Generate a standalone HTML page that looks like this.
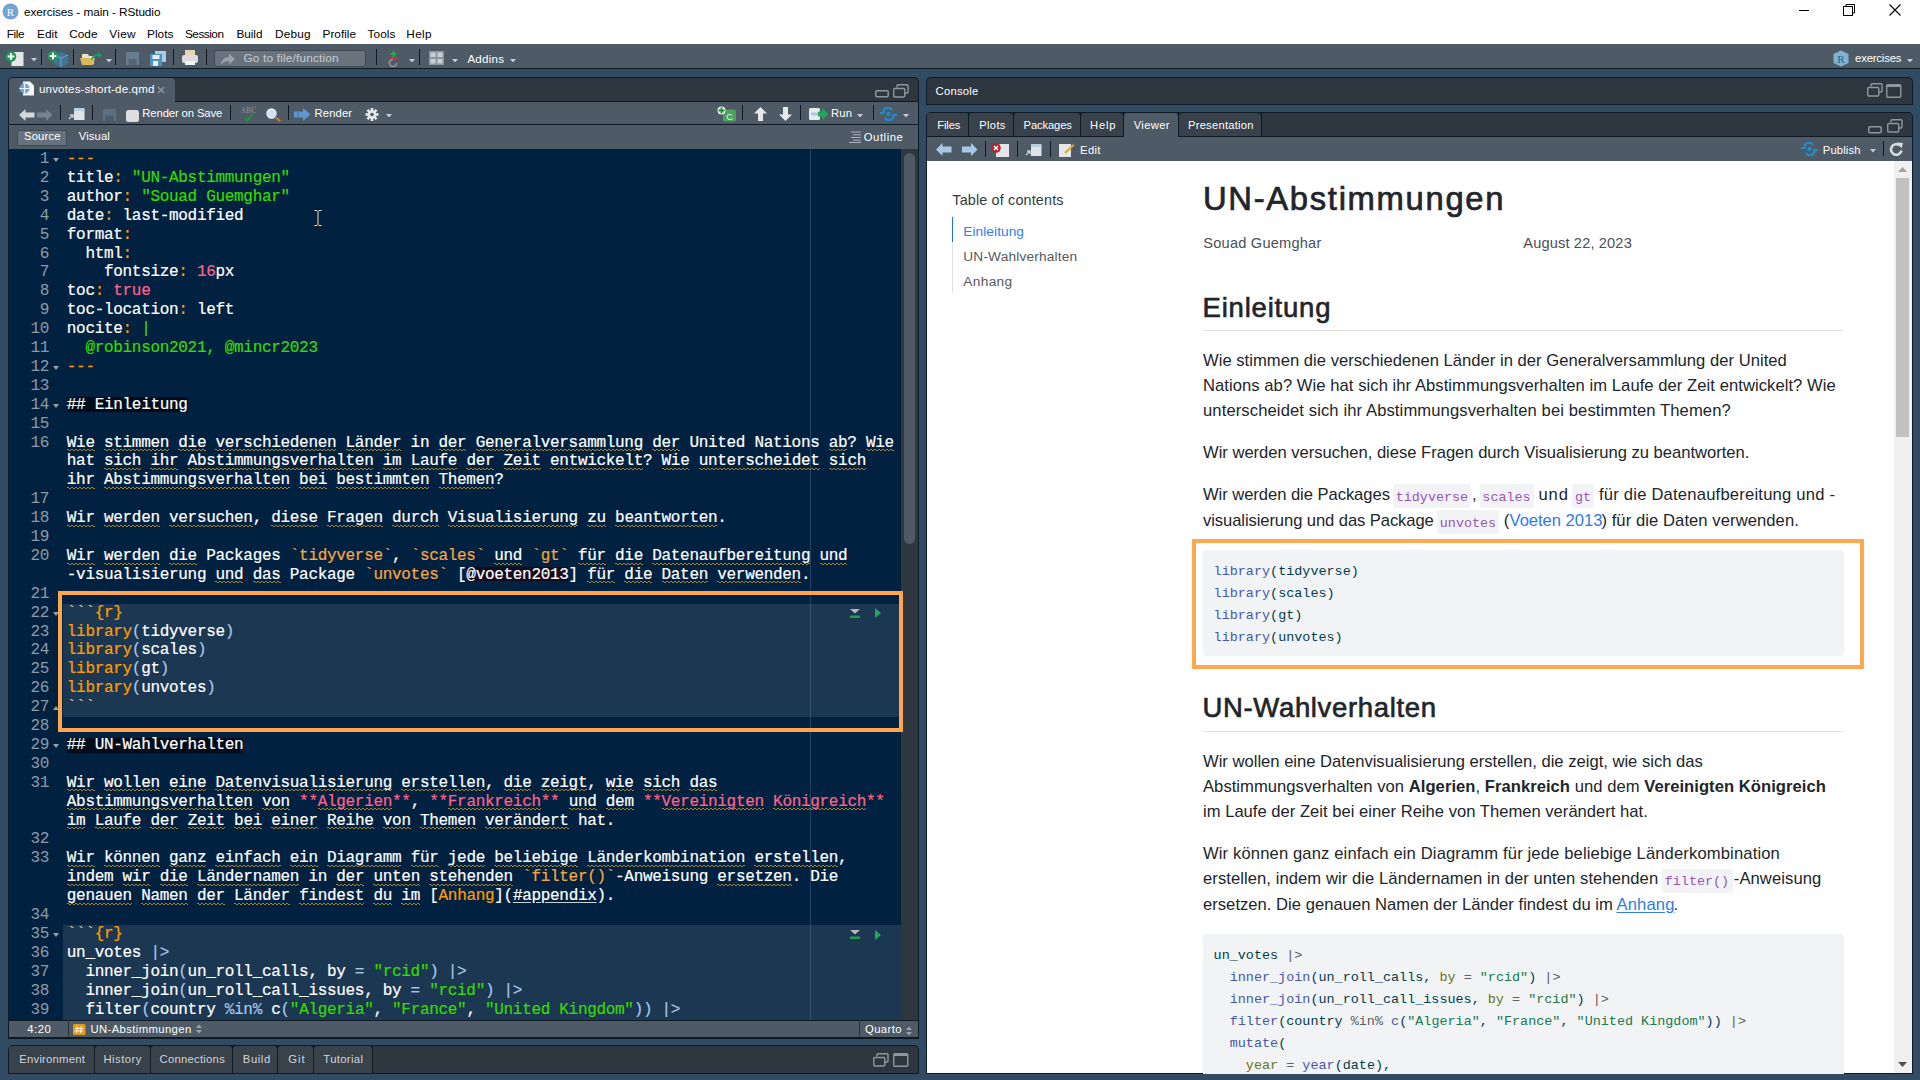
<!DOCTYPE html><html><head><meta charset="utf-8"><style>
*{margin:0;padding:0;box-sizing:border-box}
html,body{width:1920px;height:1080px;overflow:hidden;background:#314b63}
body>div{position:absolute}
.t{white-space:pre}
.cl{position:absolute;left:66.8px;height:18.9px;line-height:18.9px;font-family:'Liberation Mono',monospace;font-size:16px;letter-spacing:-0.31px;white-space:pre;margin-top:-0.1px;-webkit-text-stroke-width:0.2px}
.ln{position:absolute;left:8px;width:41px;text-align:right;height:18.9px;line-height:18.9px;font-family:'Liberation Mono',monospace;font-size:16px;letter-spacing:-0.31px;color:#8e9aa6;white-space:pre;margin-top:-0.1px}
.vc{position:absolute;white-space:pre;font-family:'Liberation Mono',monospace;font-size:13.45px;line-height:15.23px}
.cl u{text-decoration:none;background-image:repeating-linear-gradient(90deg,#a88224 0 2px,transparent 2px 4px),repeating-linear-gradient(90deg,transparent 0 2px,#a88224 2px 4px);background-size:100% 1px,100% 1px;background-position:0 15.6px,0 16.6px;background-repeat:no-repeat}
.cl .ul{text-decoration:underline;text-decoration-color:#c9d0d8;text-underline-offset:2px}
</style></head><body><div style="left:0px;top:0px;width:1920px;height:44px;background:#ffffff;"></div>
<div style="left:0px;top:44px;width:1920px;height:1036px;background:#314b63;"></div>
<div style="left:0px;top:44px;width:1920px;height:24px;background:#4e5a66;"></div>
<div style="left:0px;top:68px;width:1920px;height:1px;background:#0e1b26;"></div>
<div style="left:8px;top:77px;width:911px;height:962px;background:#0e1b26;border-radius:5px 5px 0 0;"></div>
<div style="left:9px;top:78px;width:909px;height:23px;background:#2e363f;border-radius:4px 4px 0 0;"></div>
<div style="left:9px;top:101px;width:909px;height:1px;background:#0e1b26;"></div>
<div style="left:9px;top:102px;width:909px;height:22px;background:#4e5a66;"></div>
<div style="left:9px;top:124px;width:909px;height:1px;background:#0e1b26;"></div>
<div style="left:9px;top:125px;width:909px;height:24px;background:#4e5a66;"></div>
<div style="left:9px;top:149px;width:892px;height:871px;background:#002240;"></div>
<div style="left:901px;top:149px;width:17px;height:871px;background:#2e363f;"></div>
<div style="left:904px;top:153px;width:11px;height:391px;background:#4e5a66;border-radius:6px;"></div>
<div style="left:9px;top:1020px;width:909px;height:1px;background:#0e1b26;"></div>
<div style="left:9px;top:1021px;width:909px;height:16px;background:#4e5a66;"></div>
<div style="left:8px;top:1045px;width:911px;height:29px;background:#0e1b26;border-radius:5px 5px 0 0;"></div>
<div style="left:9px;top:1046px;width:909px;height:27px;background:#2e363f;border-radius:4px 4px 0 0;"></div>
<div style="left:926px;top:77px;width:987px;height:28px;background:#0e1b26;border-radius:5px 5px 0 0;"></div>
<div style="left:927px;top:78px;width:985px;height:26px;background:#2e363f;border-radius:4px 4px 0 0;"></div>
<div style="left:926px;top:112px;width:987px;height:962px;background:#0e1b26;border-radius:5px 5px 0 0;"></div>
<div style="left:927px;top:113px;width:985px;height:23px;background:#2e363f;border-radius:4px 4px 0 0;"></div>
<div style="left:927px;top:137px;width:985px;height:24px;background:#4e5a66;"></div>
<div style="left:927px;top:161px;width:985px;height:912px;background:#ffffff;"></div>
<svg style="position:absolute;left:2px;top:3px;" width="17" height="17" viewBox="0 0 17 17"><circle cx="8.5" cy="8.5" r="8" fill="#72a2d6"/><text x="8.5" y="12.6" font-family="Liberation Serif" font-size="11" fill="#fff" text-anchor="middle">R</text></svg>
<div class="t" style="left:24px;top:5.62px;font-size:11.8px;line-height:13.18px;font-family:'Liberation Sans', sans-serif;color:#000;letter-spacing:-0.075px;">exercises - main - RStudio</div>
<div style="left:1799px;top:10px;width:10px;height:1px;background:#000;"></div>
<svg style="position:absolute;left:1843px;top:4px;" width="12" height="12" viewBox="0 0 12 12"><path d="M3 2.5 V0.5 H11.5 V9 H9.5" fill="none" stroke="#000" stroke-width="1"/><rect x="0.5" y="2.5" width="9" height="9" fill="none" stroke="#000" stroke-width="1"/></svg>
<svg style="position:absolute;left:1889px;top:4px;" width="12" height="12" viewBox="0 0 12 12"><path d="M0.5 0.5 L11.5 11.5 M11.5 0.5 L0.5 11.5" stroke="#000" stroke-width="1.1"/></svg>
<div class="t" style="left:6.8px;top:27.52px;font-size:11.8px;line-height:13.18px;font-family:'Liberation Sans', sans-serif;color:#000;letter-spacing:-0.438px;">File</div>
<div class="t" style="left:37px;top:27.52px;font-size:11.8px;line-height:13.18px;font-family:'Liberation Sans', sans-serif;color:#000;letter-spacing:0.056px;">Edit</div>
<div class="t" style="left:69.3px;top:27.52px;font-size:11.8px;line-height:13.18px;font-family:'Liberation Sans', sans-serif;color:#000;letter-spacing:-0.003px;">Code</div>
<div class="t" style="left:109.3px;top:27.52px;font-size:11.8px;line-height:13.18px;font-family:'Liberation Sans', sans-serif;color:#000;letter-spacing:0.279px;">View</div>
<div class="t" style="left:147px;top:27.52px;font-size:11.8px;line-height:13.18px;font-family:'Liberation Sans', sans-serif;color:#000;letter-spacing:0.067px;">Plots</div>
<div class="t" style="left:185px;top:27.52px;font-size:11.8px;line-height:13.18px;font-family:'Liberation Sans', sans-serif;color:#000;letter-spacing:-0.497px;">Session</div>
<div class="t" style="left:236.5px;top:27.52px;font-size:11.8px;line-height:13.18px;font-family:'Liberation Sans', sans-serif;color:#000;letter-spacing:-0.060px;">Build</div>
<div class="t" style="left:275px;top:27.52px;font-size:11.8px;line-height:13.18px;font-family:'Liberation Sans', sans-serif;color:#000;letter-spacing:0.182px;">Debug</div>
<div class="t" style="left:322.5px;top:27.52px;font-size:11.8px;line-height:13.18px;font-family:'Liberation Sans', sans-serif;color:#000;letter-spacing:0.009px;">Profile</div>
<div class="t" style="left:367.5px;top:27.52px;font-size:11.8px;line-height:13.18px;font-family:'Liberation Sans', sans-serif;color:#000;letter-spacing:0.113px;">Tools</div>
<div class="t" style="left:406.3px;top:27.52px;font-size:11.8px;line-height:13.18px;font-family:'Liberation Sans', sans-serif;color:#000;letter-spacing:0.310px;">Help</div>
<svg style="position:absolute;left:5px;top:50px;" width="22" height="17" viewBox="0 0 22 17"><rect x="6.5" y="2" width="12" height="14" fill="#e6e6e6"/><circle cx="6" cy="6.5" r="5.3" fill="#1d9a58"/><path d="M6 3.2 V9.8 M2.7 6.5 H9.3" stroke="#fff" stroke-width="2"/></svg>
<svg style="position:absolute;left:31px;top:57.5px;" width="6" height="3.5" viewBox="0 0 6 3.5"><path d="M0 0 L6 0 L3 3.5 Z" fill="#c9cdd1"/></svg>
<div style="left:41px;top:49px;width:1px;height:16px;background:#111820;"></div>
<svg style="position:absolute;left:47px;top:50px;" width="23" height="18" viewBox="0 0 23 18"><path d="M7 5 L14 2 L21 5 L21 14 L14 17 L7 14 Z" fill="#3d7fa6" opacity="0.75"/><path d="M7 5 L14 8 L21 5 M14 8 V17" stroke="#62a8cc" stroke-width="1" fill="none"/><circle cx="6" cy="6" r="5.3" fill="#1d9a58"/><path d="M6 2.7 V9.3 M2.7 6 H9.3" stroke="#fff" stroke-width="2"/></svg>
<div style="left:73px;top:49px;width:1px;height:16px;background:#111820;"></div>
<svg style="position:absolute;left:80px;top:51px;" width="23" height="15" viewBox="0 0 23 15"><path d="M2 3 H8 L9 5 H14 V13 H2 Z" fill="#e8e2c8"/><path d="M0 7 H15 L13 14 H2 Z" fill="#d9b861"/><path d="M11 8 Q13 3 18 3 L18 1 L22 4 L18 7 L18 5 Q14 5 12 9Z" fill="#1f9a6a"/></svg>
<svg style="position:absolute;left:106px;top:58.5px;" width="6" height="3.5" viewBox="0 0 6 3.5"><path d="M0 0 L6 0 L3 3.5 Z" fill="#c9cdd1"/></svg>
<div style="left:115px;top:49px;width:1px;height:16px;background:#111820;"></div>
<svg style="position:absolute;left:126px;top:52px;opacity:0.85" width="14" height="14" viewBox="0 0 14 14"><rect x="0" y="0" width="13" height="13" fill="#6e8396"/><rect x="2.5" y="7" width="8" height="6" fill="#55697c"/></svg>
<svg style="position:absolute;left:150px;top:51px;" width="17" height="15" viewBox="0 0 17 15"><rect x="5" y="0" width="11" height="11" fill="#a9cde6"/><rect x="0" y="3" width="12" height="12" fill="#4f8fc2"/><rect x="2.5" y="4" width="7" height="4" fill="#e8eef3"/><rect x="3" y="10" width="5" height="5" fill="#e8eef3"/></svg>
<div style="left:173px;top:49px;width:1px;height:16px;background:#111820;"></div>
<svg style="position:absolute;left:182px;top:50px;" width="17" height="16" viewBox="0 0 17 16"><rect x="3" y="0" width="10" height="6" fill="#e2d6b0"/><rect x="0" y="5" width="16" height="8" rx="2" fill="#dcdcdc"/><rect x="3" y="11" width="10" height="4" fill="#f2f2f2"/></svg>
<div style="left:206px;top:49px;width:1px;height:16px;background:#111820;"></div>
<div style="left:214px;top:50px;width:152px;height:17px;background:#68737e;border:1px solid #3d4853;border-radius:3px;"></div>
<svg style="position:absolute;left:220px;top:52px;" width="16" height="14" viewBox="0 0 16 14"><path d="M1 13 Q2 5 9 5 V1.5 L15 7 L9 12.5 V9 Q4 9 1 13Z" fill="#98a2ab"/></svg>
<div class="t" style="left:243.4px;top:52.32px;font-size:11.8px;line-height:13.18px;font-family:'Liberation Sans', sans-serif;color:#c6ccd1;letter-spacing:0.193px;">Go to file/function</div>
<div style="left:376px;top:49px;width:1px;height:16px;background:#111820;"></div>
<svg style="position:absolute;left:388px;top:50px;" width="11" height="17" viewBox="0 0 11 17"><path d="M5.5 1 V7 M2.5 4 H8.5" stroke="#22aa44" stroke-width="2"/><path d="M1.5 8.5 H9.5" stroke="#cc3333" stroke-width="2"/><path d="M8.5 13 A3.5 3.5 0 1 1 5 9.5" fill="none" stroke="#8c98a3" stroke-width="1.6"/></svg>
<svg style="position:absolute;left:409px;top:58.5px;" width="6" height="3.5" viewBox="0 0 6 3.5"><path d="M0 0 L6 0 L3 3.5 Z" fill="#c9cdd1"/></svg>
<div style="left:419px;top:49px;width:1px;height:16px;background:#111820;"></div>
<svg style="position:absolute;left:429px;top:51px;" width="16" height="14" viewBox="0 0 16 14"><rect x="0" y="0" width="15" height="14" fill="#8b96a0"/><rect x="1.5" y="1.5" width="5" height="4.5" fill="#c8cdd2"/><rect x="8.5" y="1.5" width="5" height="4.5" fill="#c8cdd2"/><rect x="1.5" y="8" width="5" height="4.5" fill="#c8cdd2"/><rect x="8.5" y="8" width="5" height="4.5" fill="#c8cdd2"/></svg>
<svg style="position:absolute;left:452px;top:58.5px;" width="6" height="3.5" viewBox="0 0 6 3.5"><path d="M0 0 L6 0 L3 3.5 Z" fill="#c9cdd1"/></svg>
<div class="t" style="left:467.4px;top:52.50px;font-size:11.6px;line-height:12.96px;font-family:'Liberation Sans', sans-serif;color:#fff;letter-spacing:0.226px;">Addins</div>
<svg style="position:absolute;left:510px;top:58.5px;" width="6" height="3.5" viewBox="0 0 6 3.5"><path d="M0 0 L6 0 L3 3.5 Z" fill="#c9cdd1"/></svg>
<svg style="position:absolute;left:1833px;top:50px;" width="16" height="17" viewBox="0 0 16 17"><path d="M8 0.5 L15.5 4 V13 L8 16.5 L0.5 13 V4 Z" fill="#7fb3cf"/><text x="8" y="12.5" font-family="Liberation Serif" font-size="11" fill="#2a5f8a" text-anchor="middle">R</text></svg>
<div class="t" style="left:1855px;top:52.27px;font-size:11.3px;line-height:12.62px;font-family:'Liberation Sans', sans-serif;color:#fff;letter-spacing:-0.153px;">exercises</div>
<svg style="position:absolute;left:1907px;top:58.5px;" width="6" height="3.5" viewBox="0 0 6 3.5"><path d="M0 0 L6 0 L3 3.5 Z" fill="#c9cdd1"/></svg>
<div style="left:9px;top:78px;width:166px;height:24px;background:#4e5a66;border-radius:4px 4px 0 0;"></div>
<svg style="position:absolute;left:19px;top:81px;" width="16" height="15" viewBox="0 0 16 15"><path d="M4 0.5 H11 L15 4.5 V14.5 H4 Z" fill="#f4f6f8"/><circle cx="5.5" cy="7.5" r="5" fill="#6fa3dc"/><path d="M5.5 2.5 V12.5 M0.5 7.5 H10.5" stroke="#f4f6f8" stroke-width="1.2"/></svg>
<div class="t" style="left:39px;top:83.30px;font-size:11.6px;line-height:12.96px;font-family:'Liberation Sans', sans-serif;color:#fff;letter-spacing:0.140px;">unvotes-short-de.qmd</div>
<svg style="position:absolute;left:157px;top:86px;" width="8" height="8" viewBox="0 0 8 8"><path d="M1 1 L7 7 M7 1 L1 7" stroke="#8a949d" stroke-width="1.6"/></svg>
<svg style="position:absolute;left:875px;top:90px;" width="14" height="8" viewBox="0 0 14 8"><rect x="0.75" y="0.75" width="12.5" height="6" rx="1.2" fill="none" stroke="#8e979f" stroke-width="1.5"/></svg>
<svg style="position:absolute;left:893px;top:84px;" width="16" height="14" viewBox="0 0 16 14"><path d="M4 3.5 V1.8 Q4 0.75 5 0.75 H14 Q15 0.75 15 1.8 V8 Q15 9 14 9 H12" fill="none" stroke="#8e979f" stroke-width="1.4"/><rect x="0.75" y="4.5" width="11" height="8.5" rx="1" fill="none" stroke="#8e979f" stroke-width="1.4"/></svg>
<svg style="position:absolute;left:19px;top:109px;" width="16" height="12" viewBox="0 0 16 12"><path d="M0 6 L6.5 0 V3.5 H15.5 V8.5 H6.5 V12 Z" fill="#d3d7db"/></svg>
<svg style="position:absolute;left:37px;top:109px;" width="16" height="12" viewBox="0 0 16 12"><path d="M15.5 6 L9 0 V3.5 H0 V8.5 H9 V12 Z" fill="#76828d"/></svg>
<div style="left:60px;top:105px;width:1px;height:15px;background:#111820;"></div>
<svg style="position:absolute;left:68px;top:108px;" width="17" height="12" viewBox="0 0 17 12"><path d="M6 1.5 Q6 0 8 0 H15 Q16.5 0 16.5 2 V12 H6 Z" fill="#dfe4e8"/><path d="M6 0 H16.5 V3 H6Z" fill="#b7cde0"/><path d="M1 11 L5 7 M2 7 H5 V10" stroke="#c8cdd2" stroke-width="1.4" fill="none"/></svg>
<div style="left:92px;top:105px;width:1px;height:15px;background:#111820;"></div>
<svg style="position:absolute;left:103px;top:109px;" width="13" height="12" viewBox="0 0 13 12"><rect x="0" y="0" width="13" height="12" fill="#5a6f82"/><rect x="2.5" y="6.5" width="8" height="5.5" fill="#485b6d"/></svg>
<div style="left:125.5px;top:110px;width:13px;height:12px;background:#dcdee0;border-radius:2.5px;"></div>
<div class="t" style="left:142.3px;top:107.47px;font-size:11.3px;line-height:12.62px;font-family:'Liberation Sans', sans-serif;color:#fff;letter-spacing:-0.128px;">Render on Save</div>
<div style="left:230px;top:105px;width:1px;height:15px;background:#111820;"></div>
<svg style="position:absolute;left:239px;top:106px;" width="19" height="16" viewBox="0 0 19 16"><text x="9.5" y="6.5" font-family="Liberation Serif" font-size="7.5" fill="#8d969e" text-anchor="middle">ABC</text><path d="M6 11.5 L8.5 14.5 L13 8.5" stroke="#1a9a3a" stroke-width="1.8" fill="none"/></svg>
<svg style="position:absolute;left:266px;top:108px;" width="16" height="14" viewBox="0 0 16 14"><circle cx="5.5" cy="5.5" r="4.5" fill="#cfe2f0" stroke="#e8eef2" stroke-width="1.4"/><path d="M9 9 L14.5 13.5" stroke="#b07a3a" stroke-width="2.4"/></svg>
<div style="left:288px;top:105px;width:1px;height:15px;background:#111820;"></div>
<svg style="position:absolute;left:294px;top:108px;" width="17" height="13" viewBox="0 0 17 13"><path d="M0 3.5 H9 V0 L16.5 6.5 L9 13 V9.5 H0 Z" fill="#5d97d1"/><path d="M4 3.5 V9.5" stroke="#3b6fa5" stroke-width="1"/></svg>
<div class="t" style="left:314.6px;top:107.47px;font-size:11.3px;line-height:12.62px;font-family:'Liberation Sans', sans-serif;color:#fff;letter-spacing:0.088px;">Render</div>
<svg style="position:absolute;left:365px;top:108px;" width="14" height="13" viewBox="0 0 14 13"><g transform="translate(7 6.5)"><circle r="4.2" fill="#e8eaec"/><g fill="#e8eaec"><rect x="-1.3" y="-6.5" width="2.6" height="13"/><rect x="-1.3" y="-6.5" width="2.6" height="13" transform="rotate(45)"/><rect x="-1.3" y="-6.5" width="2.6" height="13" transform="rotate(90)"/><rect x="-1.3" y="-6.5" width="2.6" height="13" transform="rotate(135)"/></g><circle r="1.8" fill="#4e5a65"/></g></svg>
<svg style="position:absolute;left:386px;top:113.5px;" width="6" height="3.5" viewBox="0 0 6 3.5"><path d="M0 0 L6 0 L3 3.5 Z" fill="#c9cdd1"/></svg>
<svg style="position:absolute;left:717px;top:106px;" width="20" height="16" viewBox="0 0 20 16"><rect x="6" y="3.5" width="13" height="12" rx="2" fill="#49a35a"/><text x="12.5" y="13.5" font-family="Liberation Sans" font-size="9" fill="#e8f4ea" text-anchor="middle">C</text><circle cx="4.5" cy="4.5" r="4" fill="#e8f4ea"/><path d="M4.5 1.5 V7.5 M1.5 4.5 H7.5" stroke="#1d8a3d" stroke-width="1.8"/></svg>
<div style="left:742px;top:105px;width:1px;height:15px;background:#111820;"></div>
<svg style="position:absolute;left:754px;top:107px;" width="13" height="14" viewBox="0 0 13 14"><path d="M6.5 0 L13 6.5 H9 V14 H4 V6.5 H0 Z" fill="#e6e9ec"/></svg>
<svg style="position:absolute;left:779px;top:107px;" width="13" height="14" viewBox="0 0 13 14"><path d="M6.5 14 L13 7.5 H9 V0 H4 V7.5 H0 Z" fill="#e6e9ec"/></svg>
<div style="left:800px;top:105px;width:1px;height:15px;background:#111820;"></div>
<svg style="position:absolute;left:809px;top:107px;" width="20" height="14" viewBox="0 0 20 14"><rect x="0" y="1" width="11" height="12" rx="1.5" fill="#e8ecef"/><rect x="2" y="5.5" width="7" height="3" fill="#a9c6e4"/><path d="M9 4.5 H13 V1 L19.5 7 L13 13 V9.5 H9 Z" fill="#22a55a"/></svg>
<div class="t" style="left:831px;top:107.27px;font-size:11.3px;line-height:12.62px;font-family:'Liberation Sans', sans-serif;color:#fff;letter-spacing:0.135px;">Run</div>
<svg style="position:absolute;left:857px;top:113.5px;" width="6" height="3.5" viewBox="0 0 6 3.5"><path d="M0 0 L6 0 L3 3.5 Z" fill="#c9cdd1"/></svg>
<div style="left:873px;top:105px;width:1px;height:15px;background:#111820;"></div>
<svg style="position:absolute;left:880px;top:107px;" width="18" height="14" viewBox="0 0 18 14"><path d="M0 6 H3.6 A4.6 4.6 0 0 1 12.2 3.2" stroke="#1a8fd6" stroke-width="2" fill="none"/><path d="M17 8 H13.4 A4.6 4.6 0 0 1 4.8 10.8" stroke="#1a8fd6" stroke-width="2" fill="none"/><circle cx="8.5" cy="7" r="2.1" fill="#1a8fd6"/></svg>
<svg style="position:absolute;left:903px;top:113.5px;" width="6" height="3.5" viewBox="0 0 6 3.5"><path d="M0 0 L6 0 L3 3.5 Z" fill="#c9cdd1"/></svg>
<div style="left:16.7px;top:129.6px;width:50.6px;height:16.7px;background:#66727d;border:1px solid #3f4a55;border-radius:2px;"></div>
<div class="t" style="left:24px;top:130.37px;font-size:11.3px;line-height:12.62px;font-family:'Liberation Sans', sans-serif;color:#fff;letter-spacing:0.139px;">Source</div>
<div class="t" style="left:78.8px;top:130.37px;font-size:11.3px;line-height:12.62px;font-family:'Liberation Sans', sans-serif;color:#fff;letter-spacing:0.085px;">Visual</div>
<svg style="position:absolute;left:849px;top:131px;" width="13" height="12" viewBox="0 0 13 12"><path d="M2 1 H12 M4 3.8 H12 M2 6.5 H12 M4 9.2 H12 M0 11.5 H12" stroke="#aab3bb" stroke-width="1.1"/></svg>
<div class="t" style="left:863.8px;top:131.02px;font-size:11.3px;line-height:12.62px;font-family:'Liberation Sans', sans-serif;color:#fff;letter-spacing:0.533px;">Outline</div>
<div style="left:68px;top:1020px;width:1px;height:17px;background:#27313a;"></div>
<div class="t" style="left:27.3px;top:1022.57px;font-size:11.3px;line-height:12.62px;font-family:'Liberation Sans', sans-serif;color:#fff;letter-spacing:0.502px;">4:20</div>
<svg style="position:absolute;left:72.5px;top:1024px;" width="13" height="11" viewBox="0 0 13 11"><rect x="0" y="0" width="12.5" height="11" rx="1.5" fill="#e39a22"/><path d="M4.5 2 L3.5 9 M8.5 2 L7.5 9 M2 4.5 H10.5 M1.5 7 H10" stroke="#fff4de" stroke-width="1"/></svg>
<div class="t" style="left:90.5px;top:1022.77px;font-size:11.3px;line-height:12.62px;font-family:'Liberation Sans', sans-serif;color:#fff;letter-spacing:0.375px;">UN-Abstimmungen</div>
<svg style="position:absolute;left:196px;top:1024px;" width="6" height="10" viewBox="0 0 6 10"><path d="M0 4 L3 0.5 L6 4Z M0 6 L3 9.5 L6 6Z" fill="#9aa3ab"/></svg>
<div style="left:859px;top:1020px;width:1px;height:17px;background:#27313a;"></div>
<div class="t" style="left:865px;top:1022.77px;font-size:11.3px;line-height:12.62px;font-family:'Liberation Sans', sans-serif;color:#fff;letter-spacing:0.391px;">Quarto</div>
<svg style="position:absolute;left:906px;top:1026px;" width="6" height="10" viewBox="0 0 6 10"><path d="M0 4 L3 0.5 L6 4Z M0 6 L3 9.5 L6 6Z" fill="#9aa3ab"/></svg>
<div style="left:93.5px;top:1046px;width:279px;height:27px;background:#0e1b26;"></div>
<div style="left:9px;top:1046px;width:84.5px;height:27px;background:#39414a;border-radius:3px 3px 0 0;"></div>
<div class="t" style="left:19.3px;top:1053.07px;font-size:11.3px;line-height:12.62px;font-family:'Liberation Sans', sans-serif;color:#d0d5da;letter-spacing:0.206px;">Environment</div>
<div style="left:94.5px;top:1046px;width:55.0px;height:27px;background:#39414a;border-radius:3px 3px 0 0;"></div>
<div class="t" style="left:103.4px;top:1053.07px;font-size:11.3px;line-height:12.62px;font-family:'Liberation Sans', sans-serif;color:#d0d5da;letter-spacing:0.490px;">History</div>
<div style="left:150.5px;top:1046px;width:81.80000000000001px;height:27px;background:#39414a;border-radius:3px 3px 0 0;"></div>
<div class="t" style="left:159.5px;top:1053.07px;font-size:11.3px;line-height:12.62px;font-family:'Liberation Sans', sans-serif;color:#d0d5da;letter-spacing:0.248px;">Connections</div>
<div style="left:233.3px;top:1046px;width:44.0px;height:27px;background:#39414a;border-radius:3px 3px 0 0;"></div>
<div class="t" style="left:242.8px;top:1053.07px;font-size:11.3px;line-height:12.62px;font-family:'Liberation Sans', sans-serif;color:#d0d5da;letter-spacing:0.568px;">Build</div>
<div style="left:278.3px;top:1046px;width:34.30000000000001px;height:27px;background:#39414a;border-radius:3px 3px 0 0;"></div>
<div class="t" style="left:288.2px;top:1053.07px;font-size:11.3px;line-height:12.62px;font-family:'Liberation Sans', sans-serif;color:#d0d5da;letter-spacing:1.030px;">Git</div>
<div style="left:313.6px;top:1046px;width:58.0px;height:27px;background:#39414a;border-radius:3px 3px 0 0;"></div>
<div class="t" style="left:323.3px;top:1053.07px;font-size:11.3px;line-height:12.62px;font-family:'Liberation Sans', sans-serif;color:#d0d5da;letter-spacing:0.348px;">Tutorial</div>
<svg style="position:absolute;left:873px;top:1053px;" width="16" height="14" viewBox="0 0 16 14"><path d="M4 3.5 V1.8 Q4 0.75 5 0.75 H14 Q15 0.75 15 1.8 V8 Q15 9 14 9 H12" fill="none" stroke="#8e979f" stroke-width="1.4"/><rect x="0.75" y="4.5" width="11" height="8.5" rx="1" fill="none" stroke="#8e979f" stroke-width="1.4"/></svg>
<svg style="position:absolute;left:893px;top:1053px;" width="16" height="14" viewBox="0 0 16 14"><rect x="0.75" y="0.75" width="14" height="12.5" rx="1" fill="none" stroke="#8e979f" stroke-width="1.4"/><path d="M0.75 2 H14.75" stroke="#8e979f" stroke-width="2"/></svg>
<div class="t" style="left:935.6px;top:85.27px;font-size:11.3px;line-height:12.62px;font-family:'Liberation Sans', sans-serif;color:#fff;letter-spacing:0.207px;">Console</div>
<svg style="position:absolute;left:1867px;top:83px;" width="16" height="14" viewBox="0 0 16 14"><path d="M4 3.5 V1.8 Q4 0.75 5 0.75 H14 Q15 0.75 15 1.8 V8 Q15 9 14 9 H12" fill="none" stroke="#8e979f" stroke-width="1.4"/><rect x="0.75" y="4.5" width="11" height="8.5" rx="1" fill="none" stroke="#8e979f" stroke-width="1.4"/></svg>
<svg style="position:absolute;left:1886px;top:84px;" width="16" height="14" viewBox="0 0 16 14"><rect x="0.75" y="0.75" width="14" height="12.5" rx="1" fill="none" stroke="#8e979f" stroke-width="1.4"/><path d="M0.75 2 H14.75" stroke="#8e979f" stroke-width="2"/></svg>
<div style="left:968px;top:113px;width:294px;height:23px;background:#0e1b26;"></div>
<div style="left:927px;top:113px;width:41px;height:23px;background:#39414a;border-radius:3px 3px 0 0;"></div>
<div class="t" style="left:937.2px;top:119.06px;font-size:11.2px;line-height:12.51px;font-family:'Liberation Sans', sans-serif;color:#fff;letter-spacing:-0.087px;">Files</div>
<div style="left:969px;top:113px;width:44px;height:23px;background:#39414a;border-radius:3px 3px 0 0;"></div>
<div class="t" style="left:979.2px;top:119.06px;font-size:11.2px;line-height:12.51px;font-family:'Liberation Sans', sans-serif;color:#fff;letter-spacing:0.350px;">Plots</div>
<div style="left:1014px;top:113px;width:66px;height:23px;background:#39414a;border-radius:3px 3px 0 0;"></div>
<div class="t" style="left:1023.6px;top:119.06px;font-size:11.2px;line-height:12.51px;font-family:'Liberation Sans', sans-serif;color:#fff;letter-spacing:-0.127px;">Packages</div>
<div style="left:1081px;top:113px;width:42px;height:23px;background:#39414a;border-radius:3px 3px 0 0;"></div>
<div class="t" style="left:1090px;top:119.06px;font-size:11.2px;line-height:12.51px;font-family:'Liberation Sans', sans-serif;color:#fff;letter-spacing:0.822px;">Help</div>
<div style="left:1124px;top:113px;width:54px;height:25px;background:#4e5a66;border-radius:3px 3px 0 0;"></div>
<div class="t" style="left:1133.75px;top:119.06px;font-size:11.2px;line-height:12.51px;font-family:'Liberation Sans', sans-serif;color:#fff;letter-spacing:0.344px;">Viewer</div>
<div style="left:1179px;top:113px;width:82px;height:23px;background:#39414a;border-radius:3px 3px 0 0;"></div>
<div class="t" style="left:1188px;top:119.06px;font-size:11.2px;line-height:12.51px;font-family:'Liberation Sans', sans-serif;color:#fff;letter-spacing:0.238px;">Presentation</div>
<svg style="position:absolute;left:1868px;top:126px;" width="14" height="8" viewBox="0 0 14 8"><rect x="0.75" y="0.75" width="12.5" height="6" rx="1.2" fill="none" stroke="#8e979f" stroke-width="1.5"/></svg>
<svg style="position:absolute;left:1887px;top:119px;" width="16" height="14" viewBox="0 0 16 14"><path d="M4 3.5 V1.8 Q4 0.75 5 0.75 H14 Q15 0.75 15 1.8 V8 Q15 9 14 9 H12" fill="none" stroke="#8e979f" stroke-width="1.4"/><rect x="0.75" y="4.5" width="11" height="8.5" rx="1" fill="none" stroke="#8e979f" stroke-width="1.4"/></svg>
<svg style="position:absolute;left:935.5px;top:143px;" width="16" height="13" viewBox="0 0 16 13"><path d="M0 6.5 L6.5 0 V3.5 H15.5 V9.5 H6.5 V13 Z" fill="#a6c8e6"/></svg>
<svg style="position:absolute;left:961.5px;top:143px;" width="16" height="13" viewBox="0 0 16 13"><path d="M15.5 6.5 L9 0 V3.5 H0 V9.5 H9 V13 Z" fill="#a6c8e6"/></svg>
<div style="left:984.5px;top:141px;width:1px;height:16px;background:#111820;"></div>
<svg style="position:absolute;left:991px;top:143px;" width="19" height="14" viewBox="0 0 19 14"><rect x="5" y="1" width="13" height="13" fill="#e6e6e6"/><circle cx="5" cy="5" r="4.8" fill="#b3272d"/><path d="M3 3 L7 7 M7 3 L3 7" stroke="#fff" stroke-width="1.4"/></svg>
<div style="left:1016.5px;top:141px;width:1px;height:16px;background:#111820;"></div>
<svg style="position:absolute;left:1025px;top:144px;" width="17" height="12" viewBox="0 0 17 12"><path d="M6 1.5 Q6 0 8 0 H15 Q16.5 0 16.5 2 V12 H6 Z" fill="#dfe4e8"/><path d="M6 0 H16.5 V3 H6Z" fill="#b7cde0"/><path d="M1 11 L5 7 M2 7 H5 V10" stroke="#c8cdd2" stroke-width="1.4" fill="none"/></svg>
<div style="left:1049.5px;top:141px;width:1px;height:16px;background:#111820;"></div>
<svg style="position:absolute;left:1058px;top:143px;" width="18" height="14" viewBox="0 0 18 14"><rect x="1" y="1" width="12" height="13" fill="#e6e6e6"/><path d="M7 10 L16 1.5" stroke="#d8a838" stroke-width="2"/><path d="M15 1 L17 0" stroke="#c33" stroke-width="1.5"/></svg>
<div class="t" style="left:1080px;top:144.27px;font-size:11.3px;line-height:12.62px;font-family:'Liberation Sans', sans-serif;color:#fff;letter-spacing:0.343px;">Edit</div>
<svg style="position:absolute;left:1801px;top:142px;" width="18" height="14" viewBox="0 0 18 14"><path d="M0 6 H3.6 A4.6 4.6 0 0 1 12.2 3.2" stroke="#1a8fd6" stroke-width="2" fill="none"/><path d="M17 8 H13.4 A4.6 4.6 0 0 1 4.8 10.8" stroke="#1a8fd6" stroke-width="2" fill="none"/><circle cx="8.5" cy="7" r="2.1" fill="#1a8fd6"/></svg>
<div class="t" style="left:1822.8px;top:144.27px;font-size:11.3px;line-height:12.62px;font-family:'Liberation Sans', sans-serif;color:#fff;letter-spacing:0.106px;">Publish</div>
<svg style="position:absolute;left:1870px;top:149.0px;" width="6" height="3.5" viewBox="0 0 6 3.5"><path d="M0 0 L6 0 L3 3.5 Z" fill="#c9cdd1"/></svg>
<div style="left:1883px;top:140.5px;width:1px;height:15.5px;background:#111820;"></div>
<svg style="position:absolute;left:1889px;top:142px;" width="15" height="15" viewBox="0 0 15 15"><path d="M12.5 8.5 A5.3 5.3 0 1 1 10.8 3.5" fill="none" stroke="#d7dce0" stroke-width="2.6"/><path d="M8 0.5 L14 1 L12.5 6.5 Z" fill="#d7dce0"/></svg>
<div style="left:63px;top:603.6999999999999px;width:838px;height:113.39999999999999px;background:#1c3752;"></div>
<div style="left:63px;top:925.0px;width:838px;height:95.0px;background:#1c3752;"></div>
<div style="left:810px;top:149px;width:1px;height:871px;background:rgba(120,150,190,0.28);"></div>
<div style="left:66.8px;top:397.29999999999995px;width:120.76999999999998px;height:15px;background:#000c1a;"></div>
<div style="left:66.8px;top:737.5px;width:176.51px;height:15px;background:#000c1a;"></div>
<div style="left:466.27px;top:567.4px;width:102.19px;height:14px;background:#160b1a;"></div>
<svg style="position:absolute;left:850px;top:608.7px" width="11" height="10" viewBox="0 0 11 10"><path d="M0 0 H10 L5 4.5Z" fill="#b3b9bf"/><rect x="0" y="6.5" width="10" height="2.5" fill="#1e9c50"/></svg>
<svg style="position:absolute;left:875px;top:608.2px" width="7" height="10" viewBox="0 0 7 10"><path d="M0 0 L6 5 L0 10Z" fill="#1eaa55"/></svg>
<svg style="position:absolute;left:850px;top:930.0px" width="11" height="10" viewBox="0 0 11 10"><path d="M0 0 H10 L5 4.5Z" fill="#b3b9bf"/><rect x="0" y="6.5" width="10" height="2.5" fill="#1e9c50"/></svg>
<svg style="position:absolute;left:875px;top:929.5px" width="7" height="10" viewBox="0 0 7 10"><path d="M0 0 L6 5 L0 10Z" fill="#1eaa55"/></svg>
<div class="ln" style="top:150.10px">1</div>
<svg style="position:absolute;left:52.5px;top:158.1px" width="6" height="4" viewBox="0 0 6 4"><path d="M0 0 H6 L3 4Z" fill="#9aa0a6"/></svg>
<div class="cl" style="top:150.10px"><span style="color:#ff9d00">---</span></div>
<div class="ln" style="top:169.00px">2</div>
<div class="cl" style="top:169.00px"><span style="color:#ffffff">title</span><span style="color:#ff9d00">:</span><span style="color:#3ad900"> &quot;UN-Abstimmungen&quot;</span></div>
<div class="ln" style="top:187.90px">3</div>
<div class="cl" style="top:187.90px"><span style="color:#ffffff">author</span><span style="color:#ff9d00">:</span><span style="color:#3ad900"> &quot;Souad Guemghar&quot;</span></div>
<div class="ln" style="top:206.80px">4</div>
<div class="cl" style="top:206.80px"><span style="color:#ffffff">date</span><span style="color:#ff9d00">:</span><span style="color:#ffffff"> last-modified</span></div>
<div class="ln" style="top:225.70px">5</div>
<div class="cl" style="top:225.70px"><span style="color:#ffffff">format</span><span style="color:#ff9d00">:</span></div>
<div class="ln" style="top:244.60px">6</div>
<div class="cl" style="top:244.60px"><span style="color:#ffffff">  html</span><span style="color:#ff9d00">:</span></div>
<div class="ln" style="top:263.50px">7</div>
<div class="cl" style="top:263.50px"><span style="color:#ffffff">    fontsize</span><span style="color:#ff9d00">:</span><span style="color:#ffffff"> </span><span style="color:#ff628c">16</span><span style="color:#ffffff">px</span></div>
<div class="ln" style="top:282.40px">8</div>
<div class="cl" style="top:282.40px"><span style="color:#ffffff">toc</span><span style="color:#ff9d00">:</span><span style="color:#ffffff"> </span><span style="color:#ff628c">true</span></div>
<div class="ln" style="top:301.30px">9</div>
<div class="cl" style="top:301.30px"><span style="color:#ffffff">toc-location</span><span style="color:#ff9d00">:</span><span style="color:#ffffff"> left</span></div>
<div class="ln" style="top:320.20px">10</div>
<div class="cl" style="top:320.20px"><span style="color:#ffffff">nocite</span><span style="color:#ff9d00">:</span><span style="color:#3ad900"> |</span></div>
<div class="ln" style="top:339.10px">11</div>
<div class="cl" style="top:339.10px"><span style="color:#3ad900">  @robinson2021, @mincr2023</span></div>
<div class="ln" style="top:358.00px">12</div>
<svg style="position:absolute;left:52.5px;top:366.0px" width="6" height="4" viewBox="0 0 6 4"><path d="M0 0 H6 L3 4Z" fill="#9aa0a6"/></svg>
<div class="cl" style="top:358.00px"><span style="color:#ff9d00">---</span></div>
<div class="ln" style="top:376.90px">13</div>
<div class="ln" style="top:395.80px">14</div>
<svg style="position:absolute;left:52.5px;top:403.8px" width="6" height="4" viewBox="0 0 6 4"><path d="M0 0 H6 L3 4Z" fill="#9aa0a6"/></svg>
<div class="cl" style="top:395.80px"><span style="color:#ffffff">## Einleitung</span></div>
<div class="ln" style="top:414.70px">15</div>
<div class="ln" style="top:433.60px">16</div>
<div class="cl" style="top:433.60px"><span style="color:#ffffff"><u>Wie</u> <u>stimmen</u> <u>die</u> <u>verschiedenen</u> <u>Länder</u> in <u>der</u> <u>Generalversammlung</u> <u>der</u> United Nations <u>ab</u>? <u>Wie</u></span></div>
<div class="cl" style="top:452.50px"><span style="color:#ffffff">hat <u>sich</u> <u>ihr</u> <u>Abstimmungsverhalten</u> <u>im</u> <u>Laufe</u> <u>der</u> <u>Zeit</u> <u>entwickelt</u>? <u>Wie</u> <u>unterscheidet</u> <u>sich</u></span></div>
<div class="cl" style="top:471.40px"><span style="color:#ffffff"><u>ihr</u> <u>Abstimmungsverhalten</u> <u>bei</u> <u>bestimmten</u> <u>Themen</u>?</span></div>
<div class="ln" style="top:490.30px">17</div>
<div class="ln" style="top:509.20px">18</div>
<div class="cl" style="top:509.20px"><span style="color:#ffffff"><u>Wir</u> <u>werden</u> <u>versuchen</u>, <u>diese</u> <u>Fragen</u> <u>durch</u> <u>Visualisierung</u> <u>zu</u> <u>beantworten</u>.</span></div>
<div class="ln" style="top:528.10px">19</div>
<div class="ln" style="top:547.00px">20</div>
<div class="cl" style="top:547.00px"><span style="color:#ffffff"><u>Wir</u> <u>werden</u> <u>die</u> Packages </span><span style="color:#f5a742">`tidyverse`</span><span style="color:#ffffff">, </span><span style="color:#f5a742">`scales`</span><span style="color:#ffffff"> <u>und</u> </span><span style="color:#f5a742">`gt`</span><span style="color:#ffffff"> <u>für</u> <u>die</u> <u>Datenaufbereitung</u> <u>und</u></span></div>
<div class="cl" style="top:565.90px"><span style="color:#ffffff">-visualisierung <u>und</u> <u>das</u> Package </span><span style="color:#f5a742">`unvotes`</span><span style="color:#ffffff"> [</span><span style="color:#ffffff">@voeten2013</span><span style="color:#ffffff">]</span><span style="color:#ffffff"> <u>für</u> <u>die</u> <u>Daten</u> <u>verwenden</u>.</span></div>
<div class="ln" style="top:584.80px">21</div>
<div class="ln" style="top:603.70px">22</div>
<svg style="position:absolute;left:52.5px;top:611.7px" width="6" height="4" viewBox="0 0 6 4"><path d="M0 0 H6 L3 4Z" fill="#9aa0a6"/></svg>
<div class="cl" style="top:603.70px"><span style="color:#d8c9a0">```</span><span style="color:#ff9d00">{r}</span></div>
<div class="ln" style="top:622.60px">23</div>
<div class="cl" style="top:622.60px"><span style="color:#ff9d00">library</span><span style="color:#a8c6e6">(</span><span style="color:#ffffff">tidyverse</span><span style="color:#a8c6e6">)</span></div>
<div class="ln" style="top:641.50px">24</div>
<div class="cl" style="top:641.50px"><span style="color:#ff9d00">library</span><span style="color:#a8c6e6">(</span><span style="color:#ffffff">scales</span><span style="color:#a8c6e6">)</span></div>
<div class="ln" style="top:660.40px">25</div>
<div class="cl" style="top:660.40px"><span style="color:#ff9d00">library</span><span style="color:#a8c6e6">(</span><span style="color:#ffffff">gt</span><span style="color:#a8c6e6">)</span></div>
<div class="ln" style="top:679.30px">26</div>
<div class="cl" style="top:679.30px"><span style="color:#ff9d00">library</span><span style="color:#a8c6e6">(</span><span style="color:#ffffff">unvotes</span><span style="color:#a8c6e6">)</span></div>
<div class="ln" style="top:698.20px">27</div>
<svg style="position:absolute;left:52.5px;top:706.2px" width="6" height="4" viewBox="0 0 6 4"><path d="M0 4 H6 L3 0Z" fill="#9aa0a6"/></svg>
<div class="cl" style="top:698.20px"><span style="color:#d8c9a0">```</span></div>
<div class="ln" style="top:717.10px">28</div>
<div class="ln" style="top:736.00px">29</div>
<svg style="position:absolute;left:52.5px;top:744.0px" width="6" height="4" viewBox="0 0 6 4"><path d="M0 0 H6 L3 4Z" fill="#9aa0a6"/></svg>
<div class="cl" style="top:736.00px"><span style="color:#ffffff">## UN-Wahlverhalten</span></div>
<div class="ln" style="top:754.90px">30</div>
<div class="ln" style="top:773.80px">31</div>
<div class="cl" style="top:773.80px"><span style="color:#ffffff"><u>Wir</u> <u>wollen</u> <u>eine</u> <u>Datenvisualisierung</u> <u>erstellen</u>, <u>die</u> <u>zeigt</u>, <u>wie</u> <u>sich</u> <u>das</u></span></div>
<div class="cl" style="top:792.70px"><span style="color:#ffffff"><u>Abstimmungsverhalten</u> <u>von</u> </span><span style="color:#ff628c">**</span><span style="color:#ff628c"><u>Algerien</u></span><span style="color:#ff628c">**</span><span style="color:#ffffff">, </span><span style="color:#ff628c">**</span><span style="color:#ff628c"><u>Frankreich</u></span><span style="color:#ff628c">**</span><span style="color:#ffffff"> <u>und</u> <u>dem</u> </span><span style="color:#ff628c">**</span><span style="color:#ff628c"><u>Vereinigten</u> <u>Königreich</u></span><span style="color:#ff628c">**</span></div>
<div class="cl" style="top:811.60px"><span style="color:#ffffff"><u>im</u> <u>Laufe</u> <u>der</u> <u>Zeit</u> <u>bei</u> <u>einer</u> <u>Reihe</u> <u>von</u> <u>Themen</u> <u>verändert</u> hat.</span></div>
<div class="ln" style="top:830.50px">32</div>
<div class="ln" style="top:849.40px">33</div>
<div class="cl" style="top:849.40px"><span style="color:#ffffff"><u>Wir</u> <u>können</u> <u>ganz</u> <u>einfach</u> <u>ein</u> <u>Diagramm</u> <u>für</u> <u>jede</u> <u>beliebige</u> <u>Länderkombination</u> <u>erstellen</u>,</span></div>
<div class="cl" style="top:868.30px"><span style="color:#ffffff"><u>indem</u> <u>wir</u> <u>die</u> <u>Ländernamen</u> in <u>der</u> <u>unten</u> <u>stehenden</u> </span><span style="color:#f5a742">`filter()`</span><span style="color:#ffffff">-Anweisung <u>ersetzen</u>. Die</span></div>
<div class="cl" style="top:887.20px"><span style="color:#ffffff"><u>genauen</u> <u>Namen</u> <u>der</u> <u>Länder</u> <u>findest</u> <u>du</u> <u>im</u> </span><span style="color:#ffffff">[</span><span style="color:#ff9d00">Anhang</span><span style="color:#ffffff">]</span><span style="color:#ffffff">(</span><span style="color:#ffffff"><span class="ul">#appendix</span></span><span style="color:#ffffff">).</span></div>
<div class="ln" style="top:906.10px">34</div>
<div class="ln" style="top:925.00px">35</div>
<svg style="position:absolute;left:52.5px;top:933.0px" width="6" height="4" viewBox="0 0 6 4"><path d="M0 0 H6 L3 4Z" fill="#9aa0a6"/></svg>
<div class="cl" style="top:925.00px"><span style="color:#d8c9a0">```</span><span style="color:#ff9d00">{r}</span></div>
<div class="ln" style="top:943.90px">36</div>
<div class="cl" style="top:943.90px"><span style="color:#ffffff">un_votes </span><span style="color:#a8c6e6">|&gt;</span></div>
<div class="ln" style="top:962.80px">37</div>
<div class="cl" style="top:962.80px"><span style="color:#ffffff">  inner_join</span><span style="color:#a8c6e6">(</span><span style="color:#ffffff">un_roll_calls, by </span><span style="color:#a8c6e6">=</span><span style="color:#ffffff"> </span><span style="color:#3ad900">&quot;rcid&quot;</span><span style="color:#a8c6e6">)</span><span style="color:#ffffff"> </span><span style="color:#a8c6e6">|&gt;</span></div>
<div class="ln" style="top:981.70px">38</div>
<div class="cl" style="top:981.70px"><span style="color:#ffffff">  inner_join</span><span style="color:#a8c6e6">(</span><span style="color:#ffffff">un_roll_call_issues, by </span><span style="color:#a8c6e6">=</span><span style="color:#ffffff"> </span><span style="color:#3ad900">&quot;rcid&quot;</span><span style="color:#a8c6e6">)</span><span style="color:#ffffff"> </span><span style="color:#a8c6e6">|&gt;</span></div>
<div class="ln" style="top:1000.60px">39</div>
<div class="cl" style="top:1000.60px"><span style="color:#ffffff">  filter</span><span style="color:#a8c6e6">(</span><span style="color:#ffffff">country </span><span style="color:#a8c6e6">%in%</span><span style="color:#ffffff"> c</span><span style="color:#a8c6e6">(</span><span style="color:#3ad900">&quot;Algeria&quot;</span><span style="color:#ffffff">, </span><span style="color:#3ad900">&quot;France&quot;</span><span style="color:#ffffff">, </span><span style="color:#3ad900">&quot;United Kingdom&quot;</span><span style="color:#a8c6e6">))</span><span style="color:#ffffff"> </span><span style="color:#a8c6e6">|&gt;</span></div>
<svg style="position:absolute;left:313px;top:209px" width="10" height="18" viewBox="0 0 10 18"><path d="M1.5 1.5 H4 L5 2.5 L6 1.5 H8.5 M5 2.5 V15.5 M1.5 16.5 H4 L5 15.5 L6 16.5 H8.5" stroke="#111" stroke-width="2.6" fill="none"/><path d="M1.5 1.5 H4 L5 2.5 L6 1.5 H8.5 M5 2.5 V15.5 M1.5 16.5 H4 L5 15.5 L6 16.5 H8.5" stroke="#f0f0f0" stroke-width="1" fill="none"/></svg>
<div style="left:58px;top:590.5px;width:845px;height:141px;background:transparent;border:4.5px solid #ffa64d;"></div>
<div class="t" style="left:952.3px;top:192.26px;font-size:14.4px;line-height:16.09px;font-family:'Liberation Sans', sans-serif;color:#343a40;letter-spacing:0.152px;">Table of contents</div>
<div style="left:952px;top:217px;width:1px;height:76px;background:#dee2e6;"></div>
<div style="left:952px;top:217px;width:1.3px;height:25px;background:#1e6ff5;"></div>
<div class="t" style="left:963.3px;top:224.10px;font-size:13.7px;line-height:15.31px;font-family:'Liberation Sans', sans-serif;color:#2f7df6;letter-spacing:0.059px;">Einleitung</div>
<div class="t" style="left:963.3px;top:249.10px;font-size:13.7px;line-height:15.31px;font-family:'Liberation Sans', sans-serif;color:#55595e;letter-spacing:0.166px;">UN-Wahlverhalten</div>
<div class="t" style="left:963.3px;top:274.10px;font-size:13.7px;line-height:15.31px;font-family:'Liberation Sans', sans-serif;color:#55595e;letter-spacing:0.333px;">Anhang</div>
<div class="t" style="left:1203px;top:181.21px;font-size:32.8px;line-height:36.64px;font-family:'Liberation Sans', sans-serif;color:#212529;letter-spacing:1.673px;-webkit-text-stroke:0.7px #212529;">UN-Abstimmungen</div>
<div class="t" style="left:1203.3px;top:234.68px;font-size:14.6px;line-height:16.31px;font-family:'Liberation Sans', sans-serif;color:#495057;letter-spacing:0.211px;">Souad Guemghar</div>
<div class="t" style="left:1523.3px;top:234.68px;font-size:14.6px;line-height:16.31px;font-family:'Liberation Sans', sans-serif;color:#495057;letter-spacing:0.154px;">August 22, 2023</div>
<div class="t" style="left:1202.5px;top:292.70px;font-size:27.5px;line-height:30.72px;font-family:'Liberation Sans', sans-serif;color:#212529;letter-spacing:0.802px;-webkit-text-stroke:0.65px #212529;">Einleitung</div>
<div style="left:1203px;top:330px;width:640px;height:1px;background:#dee2e6;"></div>
<div class="t" style="left:1203px;top:352.07px;font-size:16.6px;line-height:18.55px;font-family:'Liberation Sans', sans-serif;color:#212529;letter-spacing:0.025px;">Wie stimmen die verschiedenen Länder in der Generalversammlung der United</div>
<div class="t" style="left:1203px;top:376.97px;font-size:16.6px;line-height:18.55px;font-family:'Liberation Sans', sans-serif;color:#212529;letter-spacing:0.057px;">Nations ab? Wie hat sich ihr Abstimmungsverhalten im Laufe der Zeit entwickelt? Wie</div>
<div class="t" style="left:1203px;top:401.87px;font-size:16.6px;line-height:18.55px;font-family:'Liberation Sans', sans-serif;color:#212529;letter-spacing:0.107px;">unterscheidet sich ihr Abstimmungsverhalten bei bestimmten Themen?</div>
<div class="t" style="left:1203px;top:443.97px;font-size:16.6px;line-height:18.55px;font-family:'Liberation Sans', sans-serif;color:#212529;letter-spacing:-0.018px;">Wir werden versuchen, diese Fragen durch Visualisierung zu beantworten.</div>
<div class="t" style="left:1203px;top:486.37px;font-size:16.6px;line-height:18.55px;font-family:'Liberation Sans', sans-serif;color:#212529;letter-spacing:-0.055px;">Wir werden die Packages</div>
<div style="left:1393px;top:484px;width:78px;height:24px;background:#f1f3f5;border-radius:3px;"></div>
<div class="t" style="left:1395.78px;top:490.24px;font-size:13.4px;line-height:15.18px;font-family:'Liberation Mono', monospace;color:#9753b8;letter-spacing:0px;">tidyverse</div>
<div class="t" style="left:1472px;top:486.37px;font-size:16.6px;line-height:18.55px;font-family:'Liberation Sans', sans-serif;color:#212529;letter-spacing:0.888px;">,</div>
<div style="left:1479.5px;top:484px;width:54.0px;height:24px;background:#f1f3f5;border-radius:3px;"></div>
<div class="t" style="left:1482.35px;top:490.24px;font-size:13.4px;line-height:15.18px;font-family:'Liberation Mono', monospace;color:#9753b8;letter-spacing:0px;">scales</div>
<div class="t" style="left:1538.4px;top:486.37px;font-size:16.6px;line-height:18.55px;font-family:'Liberation Sans', sans-serif;color:#212529;letter-spacing:1.002px;">und</div>
<div style="left:1572px;top:484px;width:22px;height:24px;background:#f1f3f5;border-radius:3px;"></div>
<div class="t" style="left:1574.95px;top:490.24px;font-size:13.4px;line-height:15.18px;font-family:'Liberation Mono', monospace;color:#9753b8;letter-spacing:0px;">gt</div>
<div class="t" style="left:1599px;top:486.37px;font-size:16.6px;line-height:18.55px;font-family:'Liberation Sans', sans-serif;color:#212529;letter-spacing:0.207px;">für die Datenaufbereitung und -</div>
<div class="t" style="left:1203px;top:512.17px;font-size:16.6px;line-height:18.55px;font-family:'Liberation Sans', sans-serif;color:#212529;letter-spacing:-0.089px;">visualisierung und das Package</div>
<div style="left:1437px;top:510px;width:62px;height:24px;background:#f1f3f5;border-radius:3px;"></div>
<div class="t" style="left:1439.83px;top:516.04px;font-size:13.4px;line-height:15.18px;font-family:'Liberation Mono', monospace;color:#9753b8;letter-spacing:0px;">unvotes</div>
<div class="t" style="left:1503.8px;top:512.17px;font-size:16.6px;line-height:18.55px;font-family:'Liberation Sans', sans-serif;color:#212529;letter-spacing:0.972px;">(</div>
<div class="t" style="left:1509.5px;top:512.17px;font-size:16.6px;line-height:18.55px;font-family:'Liberation Sans', sans-serif;color:#2f7be8;letter-spacing:-0.024px;">Voeten 2013</div>
<div class="t" style="left:1601.5px;top:512.17px;font-size:16.6px;line-height:18.55px;font-family:'Liberation Sans', sans-serif;color:#212529;letter-spacing:0.972px;">)</div>
<div class="t" style="left:1611.7px;top:512.17px;font-size:16.6px;line-height:18.55px;font-family:'Liberation Sans', sans-serif;color:#212529;letter-spacing:0.075px;">für die Daten verwenden.</div>
<div style="left:1203px;top:550px;width:641px;height:105.5px;background:#f1f3f5;border-radius:4px;"></div>
<div class="vc" style="left:1213.6px;top:563.50px"><span style="color:#4758ab">library</span><span style="color:#003b4f">(</span><span style="color:#003b4f">tidyverse</span><span style="color:#003b4f">)</span></div>
<div class="vc" style="left:1213.6px;top:585.50px"><span style="color:#4758ab">library</span><span style="color:#003b4f">(</span><span style="color:#003b4f">scales</span><span style="color:#003b4f">)</span></div>
<div class="vc" style="left:1213.6px;top:607.50px"><span style="color:#4758ab">library</span><span style="color:#003b4f">(</span><span style="color:#003b4f">gt</span><span style="color:#003b4f">)</span></div>
<div class="vc" style="left:1213.6px;top:629.50px"><span style="color:#4758ab">library</span><span style="color:#003b4f">(</span><span style="color:#003b4f">unvotes</span><span style="color:#003b4f">)</span></div>
<div style="left:1192.3px;top:539.4px;width:671.8px;height:129.4px;background:transparent;border:4.4px solid #ffa851;"></div>
<div class="t" style="left:1202.5px;top:692.50px;font-size:27.5px;line-height:30.72px;font-family:'Liberation Sans', sans-serif;color:#212529;letter-spacing:0.657px;-webkit-text-stroke:0.65px #212529;">UN-Wahlverhalten</div>
<div style="left:1203px;top:730.5px;width:640px;height:1px;background:#dee2e6;"></div>
<div class="t" style="left:1203px;top:753.47px;font-size:16.6px;line-height:18.55px;font-family:'Liberation Sans', sans-serif;color:#212529;letter-spacing:-0.001px;">Wir wollen eine Datenvisualisierung erstellen, die zeigt, wie sich das</div>
<div class="t" style="left:1203px;top:778.37px;font-size:16.6px;line-height:18.55px;font-family:'Liberation Sans', sans-serif;color:#212529;letter-spacing:0.040px;">Abstimmungsverhalten von <b>Algerien</b>, <b>Frankreich</b> und dem <b>Vereinigten Königreich</b></div>
<div class="t" style="left:1203px;top:803.27px;font-size:16.6px;line-height:18.55px;font-family:'Liberation Sans', sans-serif;color:#212529;letter-spacing:0.009px;">im Laufe der Zeit bei einer Reihe von Themen verändert hat.</div>
<div class="t" style="left:1203px;top:844.77px;font-size:16.6px;line-height:18.55px;font-family:'Liberation Sans', sans-serif;color:#212529;letter-spacing:0.132px;">Wir können ganz einfach ein Diagramm für jede beliebige Länderkombination</div>
<div class="t" style="left:1203px;top:870.27px;font-size:16.6px;line-height:18.55px;font-family:'Liberation Sans', sans-serif;color:#212529;letter-spacing:0.070px;">erstellen, indem wir die Ländernamen in der unten stehenden</div>
<div style="left:1661.5px;top:868.5px;width:71.0px;height:24.0px;background:#f1f3f5;border-radius:3px;"></div>
<div class="t" style="left:1664.8px;top:874.14px;font-size:13.4px;line-height:15.18px;font-family:'Liberation Mono', monospace;color:#9753b8;letter-spacing:0px;">filter()</div>
<div class="t" style="left:1733.8px;top:870.27px;font-size:16.6px;line-height:18.55px;font-family:'Liberation Sans', sans-serif;color:#212529;letter-spacing:0.085px;">-Anweisung</div>
<div class="t" style="left:1203px;top:895.67px;font-size:16.6px;line-height:18.55px;font-family:'Liberation Sans', sans-serif;color:#212529;letter-spacing:0.024px;">ersetzen. Die genauen Namen der Länder findest du im</div>
<div class="t" style="left:1616.5px;top:895.67px;font-size:16.6px;line-height:18.55px;font-family:'Liberation Sans', sans-serif;color:#2f7be8;letter-spacing:0.153px;text-decoration:underline;text-underline-offset:2px;">Anhang</div>
<div class="t" style="left:1673.5px;top:895.67px;font-size:16.6px;line-height:18.55px;font-family:'Liberation Sans', sans-serif;color:#212529;letter-spacing:0.888px;">.</div>
<div style="left:1203px;top:934px;width:641px;height:140px;background:#f1f3f5;border-radius:4px 4px 0 0;"></div>
<div class="vc" style="left:1213.6px;top:947.50px"><span style="color:#003b4f">un_votes </span><span style="color:#5e5e5e">|&gt;</span></div>
<div class="vc" style="left:1213.6px;top:969.50px"><span style="color:#003b4f">  </span><span style="color:#4758ab">inner_join</span><span style="color:#003b4f">(un_roll_calls, </span><span style="color:#657422">by</span><span style="color:#003b4f"> </span><span style="color:#5e5e5e">=</span><span style="color:#003b4f"> </span><span style="color:#20794d">&quot;rcid&quot;</span><span style="color:#003b4f">) </span><span style="color:#5e5e5e">|&gt;</span></div>
<div class="vc" style="left:1213.6px;top:991.50px"><span style="color:#003b4f">  </span><span style="color:#4758ab">inner_join</span><span style="color:#003b4f">(un_roll_call_issues, </span><span style="color:#657422">by</span><span style="color:#003b4f"> </span><span style="color:#5e5e5e">=</span><span style="color:#003b4f"> </span><span style="color:#20794d">&quot;rcid&quot;</span><span style="color:#003b4f">) </span><span style="color:#5e5e5e">|&gt;</span></div>
<div class="vc" style="left:1213.6px;top:1013.50px"><span style="color:#003b4f">  </span><span style="color:#4758ab">filter</span><span style="color:#003b4f">(country </span><span style="color:#5e5e5e">%in%</span><span style="color:#003b4f"> </span><span style="color:#4758ab">c</span><span style="color:#003b4f">(</span><span style="color:#20794d">&quot;Algeria&quot;</span><span style="color:#003b4f">, </span><span style="color:#20794d">&quot;France&quot;</span><span style="color:#003b4f">, </span><span style="color:#20794d">&quot;United Kingdom&quot;</span><span style="color:#003b4f">)) </span><span style="color:#5e5e5e">|&gt;</span></div>
<div class="vc" style="left:1213.6px;top:1035.50px"><span style="color:#003b4f">  </span><span style="color:#4758ab">mutate</span><span style="color:#003b4f">(</span></div>
<div class="vc" style="left:1213.6px;top:1057.50px"><span style="color:#003b4f">    </span><span style="color:#657422">year</span><span style="color:#003b4f"> </span><span style="color:#5e5e5e">=</span><span style="color:#003b4f"> </span><span style="color:#4758ab">year</span><span style="color:#003b4f">(date),</span></div>
<div style="left:1894px;top:161px;width:18px;height:912px;background:#f0f0f0;"></div>
<div style="left:1896px;top:178px;width:13px;height:259px;background:#c1c1c1;"></div>
<svg style="position:absolute;left:1898px;top:167px" width="9" height="5" viewBox="0 0 9 5"><path d="M0 5 L4.5 0 L9 5Z" fill="#a3a3a3"/></svg>
<svg style="position:absolute;left:1898px;top:1062px" width="9" height="5" viewBox="0 0 9 5"><path d="M0 0 L4.5 5 L9 0Z" fill="#505050"/></svg></body></html>
